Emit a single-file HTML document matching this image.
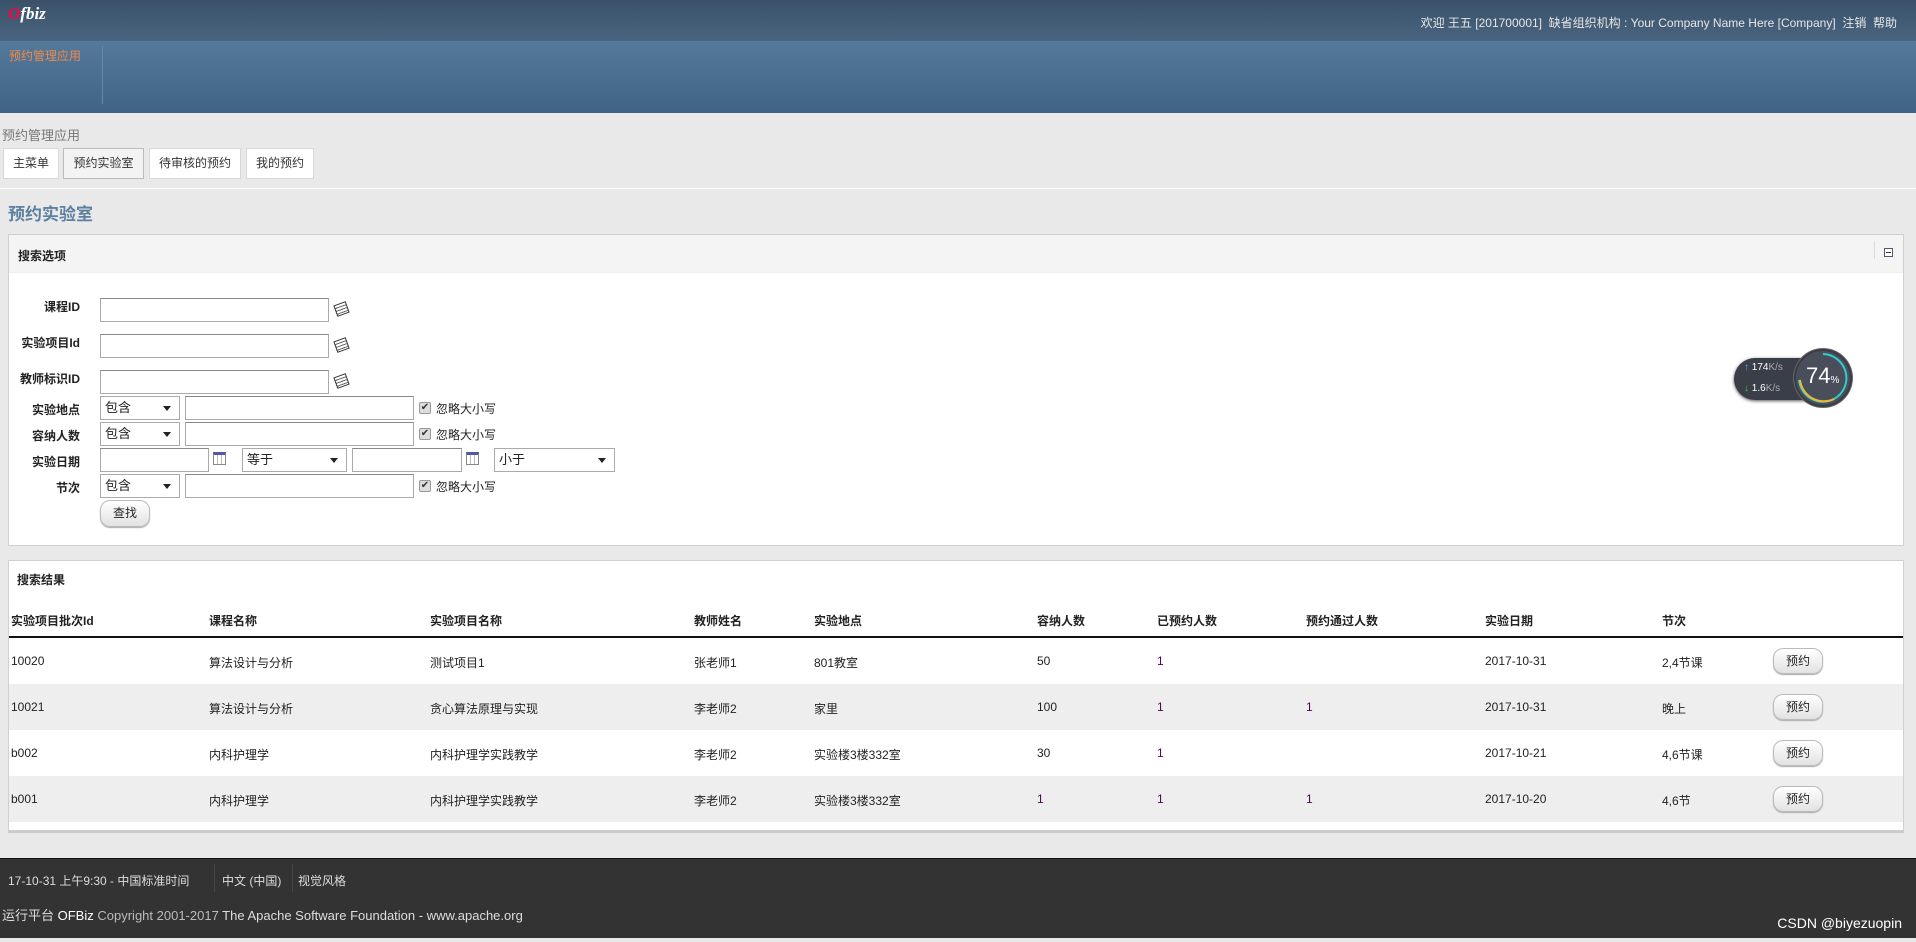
<!DOCTYPE html>
<html><head><meta charset="utf-8"><style>
*{box-sizing:border-box;margin:0;padding:0}
body{width:1916px;height:942px;overflow:hidden;background:#e9e9e9;font-family:"Liberation Sans","Noto Sans CJK SC",sans-serif;font-size:12px;color:#222;position:relative}
.a{position:absolute;white-space:nowrap}
#top{position:absolute;left:0;top:0;width:1916px;height:41px;background:linear-gradient(#3a5169,#4a6580)}
#nav{position:absolute;left:0;top:41px;width:1916px;height:72px;background:linear-gradient(#55799a,#3f6485)}
.tab{position:absolute;top:148px;height:31px;background:#fff;border:1px solid #d8d8d8;font-size:12px;text-align:center;line-height:29px;color:#333}
.panel{position:absolute;left:8px;width:1896px;background:#fff;border:1px solid #d0d0d0}
.inp{position:absolute;height:24px;border:1px solid #aaa;border-top-color:#888;background:#fff}
.sel{position:absolute;height:24px;border:1px solid #aaa;background:#fff;font-size:13px;line-height:22px;padding-left:4px}
.sel:after{content:"";position:absolute;right:8px;top:9px;border:4px solid transparent;border-top:5px solid #222}
.lbl{position:absolute;font-weight:bold;font-size:12px;text-align:right;width:80px;left:0}
.cb{position:absolute;width:12px;height:12px;background:#ddd;border:1px solid #999;border-radius:2px;font-size:10px;line-height:10px;text-align:center;color:#333}
.ign{position:absolute;font-size:12px}
.btn{position:absolute;border:1px solid #bbb;border-radius:10px;background:linear-gradient(#fff,#e2e2e2);text-align:center;font-size:12px;box-shadow:0 1px 1px #aaa}
.row{position:absolute;left:9px;width:1894px;height:46px}
.row .a{top:16px}
.cal{position:absolute;width:13px;height:13px;border:1px solid #888;background:repeating-linear-gradient(90deg,#fff 0 3px,#bbb 3px 4px);border-top:3px solid #55a}
.lk{position:absolute;width:13px;height:12px;border:1px solid #333;transform:rotate(-20deg);background:repeating-linear-gradient(#fff 0 2px,#666 2px 3px)}
</style></head><body>
<div id="top"></div><div id="nav"></div>
<div class="a" style="left:8px;top:4px;font:italic bold 17px 'Liberation Serif',serif;color:#fff"><span style="color:#f04">O</span>fbiz</div>
<div class="a" style="right:19px;top:14px;color:#e6e6e6;font-size:12px">欢迎 王五 [201700001]&nbsp; 缺省组织机构 : Your Company Name Here [Company]&nbsp; 注销&nbsp; 帮助</div>
<div class="a" style="left:9px;top:47px;color:#f08a4b;font-size:12px">预约管理应用</div>
<div class="a" style="left:102px;top:46px;width:1px;height:58px;background:#2f4d66;border-right:1px solid #6688a5"></div>
<div class="a" style="left:2px;top:125px;color:#777;font-size:13px">预约管理应用</div>
<div class="tab" style="left:3px;width:56px">主菜单</div>
<div class="tab" style="left:63px;width:81px;background:#f3f3f3;border-color:#bbb">预约实验室</div>
<div class="tab" style="left:149px;width:92px">待审核的预约</div>
<div class="tab" style="left:246px;width:68px">我的预约</div>
<div class="a" style="left:0;top:188px;width:1916px;height:1px;background:#fff"></div>
<div class="a" style="left:8px;top:200px;color:#5d7fa0;font-size:17px;font-weight:600">预约实验室</div>

<div class="panel" style="top:234px;height:312px">
<div style="height:38px;background:#f4f4f4;border-bottom:1px solid #eee;position:relative">
<div class="a" style="left:9px;top:12px;font-weight:bold;font-size:12px">搜索选项</div>
<div class="a" style="left:1865px;top:6px;width:1px;height:18px;background:#ddd"></div>
<div class="a" style="left:1875px;top:13px;width:9px;height:9px;border:1px solid #557;background:#fff"><div style="margin:3px 1px;height:1px;background:#333"></div></div>
</div></div>
<div class="lbl" style="top:298px">课程ID</div><div class="inp" style="left:100px;top:298px;width:229px"></div><div class="lk" style="left:335px;top:303px"></div>
<div class="lbl" style="top:334px">实验项目Id</div><div class="inp" style="left:100px;top:334px;width:229px"></div><div class="lk" style="left:335px;top:339px"></div>
<div class="lbl" style="top:370px">教师标识ID</div><div class="inp" style="left:100px;top:370px;width:229px"></div><div class="lk" style="left:335px;top:375px"></div>
<div class="lbl" style="top:401px">实验地点</div><div class="sel" style="left:100px;top:396px;width:80px">包含</div><div class="inp" style="left:185px;top:396px;width:229px"></div><div class="cb" style="left:419px;top:402px">✔</div><div class="ign" style="left:436px;top:400px">忽略大小写</div>
<div class="lbl" style="top:427px">容纳人数</div><div class="sel" style="left:100px;top:422px;width:80px">包含</div><div class="inp" style="left:185px;top:422px;width:229px"></div><div class="cb" style="left:419px;top:428px">✔</div><div class="ign" style="left:436px;top:426px">忽略大小写</div>
<div class="lbl" style="top:453px">实验日期</div><div class="inp" style="left:100px;top:448px;width:109px"></div><div class="cal" style="left:213px;top:452px"></div><div class="sel" style="left:242px;top:448px;width:105px">等于</div><div class="inp" style="left:352px;top:448px;width:110px"></div><div class="cal" style="left:466px;top:452px"></div><div class="sel" style="left:494px;top:448px;width:121px">小于</div>
<div class="lbl" style="top:479px">节次</div><div class="sel" style="left:100px;top:474px;width:80px">包含</div><div class="inp" style="left:185px;top:474px;width:229px"></div><div class="cb" style="left:419px;top:480px">✔</div><div class="ign" style="left:436px;top:478px">忽略大小写</div>
<div class="btn" style="left:100px;top:500px;width:50px;height:27px;line-height:25px">查找</div>

<div class="a" style="left:1734px;top:358px;width:90px;height:42px;border-radius:21px;background:#3a3e48;box-shadow:0 1px 3px #555"></div>
<div class="a" style="left:1744px;top:362px;color:#fff;font-size:10px"><span style="color:#4af">↑</span> 174<span style="color:#aaa">K/s</span></div>
<div class="a" style="left:1744px;top:383px;color:#fff;font-size:10px"><span style="color:#3c3">↓</span> 1.6<span style="color:#aaa">K/s</span></div>
<div class="a" style="left:1794px;top:349px;width:58px;height:58px;border-radius:50%;background:#4a4e5a;border:2px solid #3a3d46;box-shadow:0 0 0 1px #666"></div>
<svg class="a" style="left:1794px;top:349px" width="58" height="58"><path d="M29 5 A24 24 0 0 1 40 50 A24 24 0 0 1 5 31" fill="none" stroke="#3cc" stroke-width="2"/><path d="M40 50 A24 24 0 0 1 6 31" fill="none" stroke="#eb3" stroke-width="2"/></svg>
<div class="a" style="left:1806px;top:363px;color:#fff;font-size:22px">74<span style="font-size:10px">%</span></div>

<div class="panel" style="top:560px;height:273px;border-bottom:3px solid #ccc">
<div class="a" style="left:8px;top:10px;font-weight:bold;font-size:12px">搜索结果</div></div>
<div style="position:absolute;top:612px;left:0;font-weight:bold">
<div class="a" style="left:11px">实验项目批次Id</div><div class="a" style="left:209px">课程名称</div><div class="a" style="left:430px">实验项目名称</div><div class="a" style="left:694px">教师姓名</div><div class="a" style="left:814px">实验地点</div><div class="a" style="left:1037px">容纳人数</div><div class="a" style="left:1157px">已预约人数</div><div class="a" style="left:1306px">预约通过人数</div><div class="a" style="left:1485px">实验日期</div><div class="a" style="left:1662px">节次</div></div>
<div class="a" style="left:9px;top:636px;width:1894px;height:2px;background:#111"></div>
<div class="row" style="top:638px"><div class="a" style="left:2px">10020</div><div class="a" style="left:200px">算法设计与分析</div><div class="a" style="left:421px">测试项目1</div><div class="a" style="left:685px">张老师1</div><div class="a" style="left:805px">801教室</div><div class="a" style="left:1028px">50</div><div class="a" style="left:1148px;color:#505">1</div><div class="a" style="left:1476px">2017-10-31</div><div class="a" style="left:1653px">2,4节课</div><div class="btn" style="left:1764px;top:10px;width:50px;height:26px;line-height:24px">预约</div></div>
<div class="row" style="top:684px;background:#eee"><div class="a" style="left:2px">10021</div><div class="a" style="left:200px">算法设计与分析</div><div class="a" style="left:421px">贪心算法原理与实现</div><div class="a" style="left:685px">李老师2</div><div class="a" style="left:805px">家里</div><div class="a" style="left:1028px">100</div><div class="a" style="left:1148px;color:#505">1</div><div class="a" style="left:1297px;color:#505">1</div><div class="a" style="left:1476px">2017-10-31</div><div class="a" style="left:1653px">晚上</div><div class="btn" style="left:1764px;top:10px;width:50px;height:26px;line-height:24px">预约</div></div>
<div class="row" style="top:730px"><div class="a" style="left:2px">b002</div><div class="a" style="left:200px">内科护理学</div><div class="a" style="left:421px">内科护理学实践教学</div><div class="a" style="left:685px">李老师2</div><div class="a" style="left:805px">实验楼3楼332室</div><div class="a" style="left:1028px">30</div><div class="a" style="left:1148px;color:#505">1</div><div class="a" style="left:1476px">2017-10-21</div><div class="a" style="left:1653px">4,6节课</div><div class="btn" style="left:1764px;top:10px;width:50px;height:26px;line-height:24px">预约</div></div>
<div class="row" style="top:776px;background:#eee"><div class="a" style="left:2px">b001</div><div class="a" style="left:200px">内科护理学</div><div class="a" style="left:421px">内科护理学实践教学</div><div class="a" style="left:685px">李老师2</div><div class="a" style="left:805px">实验楼3楼332室</div><div class="a" style="left:1028px;color:#505">1</div><div class="a" style="left:1148px;color:#505">1</div><div class="a" style="left:1297px;color:#505">1</div><div class="a" style="left:1476px">2017-10-20</div><div class="a" style="left:1653px">4,6节</div><div class="btn" style="left:1764px;top:10px;width:50px;height:26px;line-height:24px">预约</div></div>

<div class="a" style="left:0;top:858px;width:1916px;height:80px;background:#333;border-top:1px solid #111"></div>
<div class="a" style="left:8px;top:872px;color:#ddd;font-size:12px">17-10-31 上午9:30 - 中国标准时间</div>
<div class="a" style="left:214px;top:864px;width:1px;height:28px;background:#222;border-right:1px solid #444"></div>
<div class="a" style="left:222px;top:872px;color:#ddd">中文 (中国)</div>
<div class="a" style="left:292px;top:864px;width:1px;height:28px;background:#222;border-right:1px solid #444"></div>
<div class="a" style="left:298px;top:872px;color:#ddd">视觉风格</div>
<div class="a" style="left:2px;top:905px;color:#ddd;font-size:13px">运行平台 <span style="color:#fff">OFBiz</span> <span style="color:#bbb">Copyright 2001-2017</span> The Apache Software Foundation - www.apache.org</div>
<div class="a" style="right:14px;top:915px;color:#fff;font-size:14px">CSDN @biyezuopin</div>
</body></html>
